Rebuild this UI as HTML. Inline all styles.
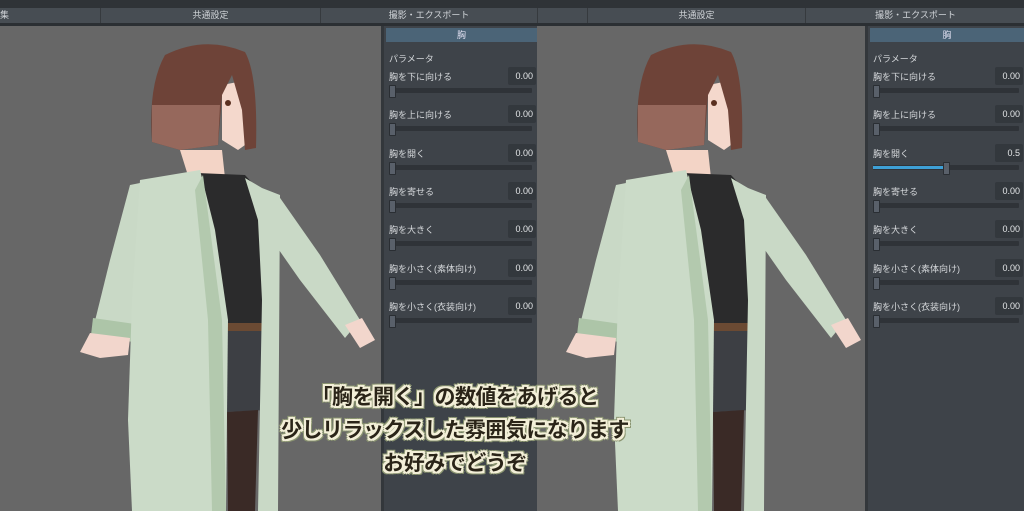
<!DOCTYPE html><html><head><meta charset="utf-8"><style>
body{margin:0;width:1024px;height:511px;overflow:hidden;background:#666;font-family:"Liberation Sans","Noto Sans CJK JP",sans-serif;position:relative}
.abs{position:absolute}
.top{left:0;top:0;width:1024px;height:8px;background:#2f3337}
.tabs{left:0;top:8px;width:1024px;height:15px;background:#474d53}
.tline{left:0;top:23px;width:1024px;height:3px;background:#2b2f33}
.tab{position:absolute;top:8px;height:15px;line-height:15px;font-size:9px;color:#d0d4d8;text-align:center;border-left:1px solid #363a3e}
.vp{top:26px;height:485px;background:#676767}
.panel{top:26px;height:485px;background:#3e4349;border-left:3px solid #33373b}
.hdr{position:absolute;left:2px;right:0;top:2px;height:14px;background:#4b6477;color:#dde;font-size:9px;line-height:14px;text-align:center}
.lbl{position:absolute;left:5px;font-size:9px;color:#d6d9dc}
.val{position:absolute;right:1px;width:28px;height:18px;background:#33383d;border-radius:2px;color:#e4e6e8;font-size:9px;line-height:18px;text-align:right;padding-right:3px;box-sizing:border-box}
.trk{position:absolute;left:5px;right:5px;height:5px;background:#2f3338;border-radius:1px}
.hd{position:absolute;left:0;top:-3px;width:5px;height:11px;background:#59606a;border:1px solid #2a2e33;border-radius:1px}
.cap{position:absolute;left:0;width:910px;text-align:center;font-weight:bold;font-size:21px;color:#2a2418;letter-spacing:-0.5px;
text-shadow:-2px 0 #f3efd8,2px 0 #f3efd8,0 -2px #f3efd8,0 2px #f3efd8,-2px -2px #f3efd8,2px 2px #f3efd8,-2px 2px #f3efd8,2px -2px #f3efd8,-3px 0 #8a9470,3px 0 #8a9470,0 3px #8a9470,0 -3px #8a9470,3px 3px #8a9470,-3px -3px #8a9470,3px -3px #8a9470,-3px 3px #8a9470}
</style></head><body>
<div class="abs top"></div><div class="abs tabs"></div><div class="abs tline"></div>
<div class="tab" style="left:-1px;width:100px;text-align:left">集</div>
<div class="tab" style="left:100px;width:219px">共通設定</div>
<div class="tab" style="left:320px;width:216px">撮影・エクスポート</div>
<div class="tab" style="left:537px;width:49px"></div>
<div class="tab" style="left:587px;width:217px">共通設定</div>
<div class="tab" style="left:805px;width:219px">撮影・エクスポート</div>
<div class="abs vp" style="left:0;width:381px"></div>
<div class="abs vp" style="left:537px;width:328px"></div>
<svg class="abs" style="left:0;top:0" width="1024" height="511">
<defs><g id="girl">
<path d="M130,185 L165,178 L152,260 L135,340 L92,333 L110,260Z" fill="#c9d9c6"/>
<path d="M93,318 L135,324 L133,342 L91,335Z" fill="#adc5a8"/>
<path d="M90,333 L130,338 L128,355 L100,358 L80,352Z" fill="#f2d6cc"/>
<path d="M255,190 L278,195 L320,255 L360,320 L345,338 L300,280 L265,230Z" fill="#c9d9c6"/>
<path d="M345,325 L362,318 L375,340 L360,348Z" fill="#f2d6cc"/>
<path d="M180,150 L222,150 L225,178 L190,182Z" fill="#f3d4c6"/>
<path d="M197,173 L245,175 L268,200 L270,323 L225,323 L210,260Z" fill="#2b2b2c"/>
<path d="M226,323 L265,323 L265,331 L226,331Z" fill="#6b4a33"/>
<path d="M227,331 L266,331 L266,410 L227,412Z" fill="#3d3f44"/>
<path d="M227,412 L258,410 L255,511 L228,511Z" fill="#3a2a26"/>
<path d="M140,180 L200,170 L215,230 L228,320 L226,511 L132,511 L128,420 L132,300Z" fill="#cbdbc8"/>
<path d="M203,175 L222,320 L226,511 L212,511 L208,320 L195,190Z" fill="#b3c9ae"/>
<path d="M245,178 L262,188 L280,195 L278,511 L258,511 L262,300 L258,220Z" fill="#c9d9c6"/>
<path d="M222,85 L248,80 L252,140 L238,150 L222,140Z" fill="#f4d8cc"/>
<path d="M165,55 Q205,35 245,52 Q258,75 256,148 L245,150 L242,110 L232,75 L222,95 L218,145 L180,150 L152,142 Q148,85 165,55Z" fill="#6e4338"/>
<path d="M152,105 L220,105 L218,145 L180,150 L152,142Z" fill="#96685c"/>
<circle cx="228" cy="103" r="3" fill="#5a3020"/>
</g></defs>
<use href="#girl"/>
<use href="#girl" transform="translate(486,0)"/>
</svg>
<div class="abs panel" style="left:381px;width:153px">
<div class="hdr">胸</div>
<div class="lbl" style="top:26px">パラメータ</div>
<div id="p1"></div>
</div>
<div class="abs panel" style="left:865px;width:156px">
<div class="hdr">胸</div>
<div class="lbl" style="top:26px">パラメータ</div>
<div id="p2"></div>
</div>
<script>
var L=["胸を下に向ける","胸を上に向ける","胸を開く","胸を寄せる","胸を大きく","胸を小さく(素体向け)","胸を小さく(衣装向け)"];
function build(id,right){var h="";for(var i=0;i<7;i++){var y=44+i*38.3;var v="0.00",fill="";if(right&&i==2){v="0.5";fill='<div style="position:absolute;left:0;top:1px;width:70px;height:3px;background:#3ea0d6"></div>';}
var hx=(right&&i==2)?70:0;
h+='<div class="lbl" style="top:'+(y)+'px">'+L[i]+'</div><div class="val" style="top:'+(y-3)+'px">'+v+'</div><div class="trk" style="top:'+(y+18)+'px">'+fill+'<div class="hd" style="left:'+hx+'px"></div></div>';}
document.getElementById(id).innerHTML=h;}
build("p1",0);build("p2",1);
</script>
<div class="cap" style="top:381px">「胸を開く」の数値をあげると</div>
<div class="cap" style="top:414px">少しリラックスした雰囲気になります</div>
<div class="cap" style="top:447px">お好みでどうぞ</div>
</body></html>
